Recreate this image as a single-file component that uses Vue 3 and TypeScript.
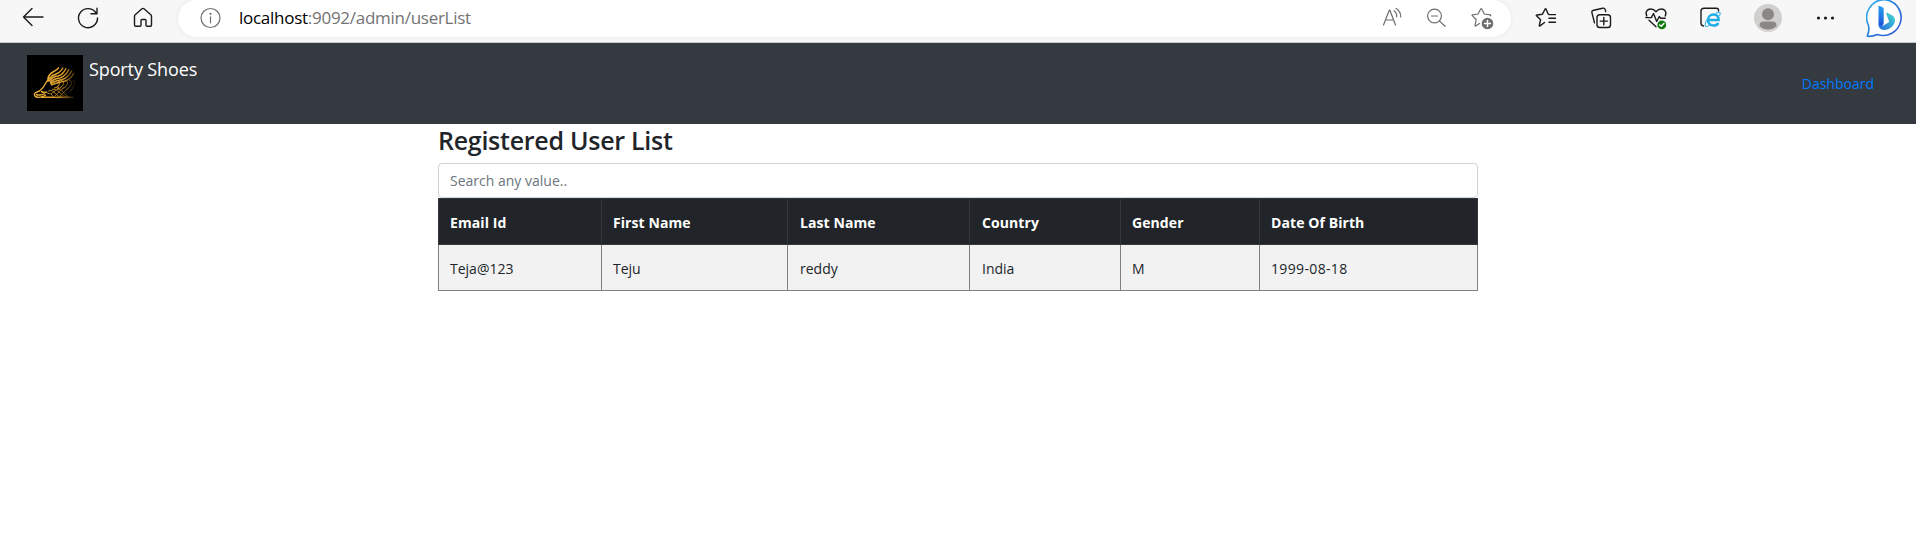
<script setup lang="ts">
interface User {
  email: string
  firstName: string
  lastName: string
  country: string
  gender: string
  birth: string
}

const columns: { key: keyof User; label: string }[] = [
  { key: 'email', label: 'Email Id' },
  { key: 'firstName', label: 'First Name' },
  { key: 'lastName', label: 'Last Name' },
  { key: 'country', label: 'Country' },
  { key: 'gender', label: 'Gender' },
  { key: 'birth', label: 'Date Of Birth' },
]

const users: User[] = [
  { email: 'Teja@123', firstName: 'Teju', lastName: 'reddy', country: 'India', gender: 'M', birth: '1999-08-18' },
]
</script>

<template>
  <div class="page">
    <header class="toolbar">
      <svg class="icon" viewBox="0 0 24 24"><path d="M22 11H2.500M11 2.500 2.500 11l8.500 8.500" /></svg>
      <svg class="icon refresh" viewBox="0 0 24 24"><path d="M20.300 7.500A9.500 9.500 0 1 0 21.500 12M21 2.200v5.500h-6" /></svg>
      <svg class="icon home" viewBox="0 0 24 24"><path d="M3.500 10.200Q3.500 9.300 4.200 8.700L11 2.800q1-.8 2 0l6.800 5.900q.7.6.7 1.500v8.800q0 1.200-1.200 1.200h-3.100q-1.200 0-1.200-1.200V14.500q0-1-1-1h-3q-1 0-1 1V19q0 1.200-1.200 1.200H4.700q-1.200 0-1.200-1.200z" /></svg>
      <div class="address">
        <svg class="icon muted" viewBox="0 0 24 24"><circle cx="11.500" cy="12" r="9.500" /><path d="M11.500 10.800v6" /><circle cx="11.500" cy="7.800" r=".5" /></svg>
        <span class="url"><b>localhost</b>:9092/admin/userList</span>
        <svg class="icon muted read" viewBox="0 0 24 24"><path d="M3.500 19 9.300 4.200h.6L15.500 19M5.500 14h8M14 4.800q3 2 2.700 6M16 2.500q5 3 4.700 8.500" /></svg>
        <svg class="icon muted glass" viewBox="0 0 24 24"><circle cx="10.500" cy="10" r="6.900" /><path d="m15.400 14.900 5.600 5.400M7.500 10h6" /></svg>
        <svg class="icon muted addstar" viewBox="0 0 24 24"><path d="M9.500 17.500 5.700 20q-.8.200-.7-.7l1.200-5.800L2.200 9.600q-.4-.6.300-.8L8 8l2.800-5.200q.4-.6.8 0L14.300 8l6 .8q.8.300.2 1" /><circle cx="17.500" cy="17.500" r="5.200" fill="#6e6e6e" /><path d="M17.500 14.500v6M14.500 17.500h6" stroke="#fff" stroke-width="1.500" /></svg>
      </div>
      <svg class="icon favs" viewBox="0 0 24 24"><path d="M10.500 16.500 6 19.900q-.9.400-.7-.6l1.300-5.600L2.500 9.800q-.6-.7.300-.8l5.600-.8L11.200 3q.4-.6.8 0l2.300 5.200q.3.400.8.400h6.400M15 12.300h6.500M15 16.200h6.500" /></svg>
      <svg class="icon next" viewBox="0 0 24 24"><rect x="8" y="8.700" width="13.500" height="12.800" rx="2.800" /><path d="M14.800 11.500v7.200M11.200 15.100h7.200M5.500 16.800 3 7Q2.300 4.800 4.700 4.200l9-2q2-.4 2.500 1.400l.5 2" /></svg>
      <svg class="icon next" viewBox="0 0 24 24"><path d="M2.800 10C.8 5.500 3.500 3 6.700 3c2.500 0 4.100 1.200 5.300 2.700C13.200 4.200 14.800 3 17.300 3c3.200 0 5.900 2.500 3.900 7M1.800 11.600h5.500L9.500 7.500l3.200 8 2.600-5 1.300 1.800h4.600M5 14.300l7 6.500" /><circle cx="17.800" cy="18.900" r="4.400" fill="#107c10" stroke="none" /><path d="m15.700 18.900 1.500 1.400 2.700-2.700" stroke="#fff" /></svg>
      <svg class="icon next" viewBox="0 0 24 24"><path d="M4.500 20Q2 19.700 2 17V5q0-2.800 3-2.800h12.300q2.200 0 2.200 2V5" /><path d="M8.700 14.100h11c.1-3.600-2-5.700-5.200-5.700s-5.500 2.400-5.500 5.700 2.300 5.400 5.500 5.400c2.300 0 4.100-.9 4.800-2.600" stroke="#20aee8" stroke-width="2.500" stroke-linecap="butt" stroke-linejoin="miter" /><path d="M17 7.300c3.500-2 5.200-.8 3.600 2.200M8.600 12.500c-3.200 5-3.200 8.900 0 7.800 1-.4 2-1 3-1.700" stroke="#38b8ee" stroke-width="1.100" /></svg>
      <svg class="avatar" viewBox="0 0 28 28"><circle cx="14" cy="14" r="14" fill="#d2d0ce" /><circle cx="14" cy="10.200" r="6" fill="#8a8886" /><path d="M5.500 22c0-4 2-4.600 4-4.600h9c2 0 4 .6 4 4.600a12 12 0 0 1-17 0z" fill="#8a8886" /></svg>
      <svg class="icon next dots" viewBox="0 0 24 24"><circle cx="5.500" cy="12" r="1.600" /><circle cx="12.500" cy="12" r="1.600" /><circle cx="19.500" cy="12" r="1.600" /></svg>
      <svg class="bing" viewBox="0 0 38 38">
        <defs>
          <linearGradient id="ring" x1="0" y1="0" x2="1" y2="1"><stop stop-color="#35b9ed" /><stop offset=".5" stop-color="#287bdc" /><stop offset="1" stop-color="#3653d8" /></linearGradient>
          <linearGradient id="stem" x1="0" y1="0" x2="0" y2="1"><stop stop-color="#25a5ee" /><stop offset="1" stop-color="#1c4edb" /></linearGradient>
          <linearGradient id="bowl" x1="0" y1="1" x2="1" y2="0"><stop stop-color="#2367df" /><stop offset="1" stop-color="#45ddd0" /></linearGradient>
        </defs>
        <path d="M19 -.4a18 18 0 1 1-7.800 34.900Q6.500 36.700 1.600 36.300 1 36 1.500 35.200 3.600 31 2.500 25.500A18 18 0 0 1 19 -.4z" fill="#fff" stroke="url(#ring)" stroke-width="1.600" />
        <path d="m12.500 5.500 3.600 1.400q1.600.5 1.600 1.800v15l-2 3.200Q12.500 27 12.500 24z" fill="url(#stem)" />
        <path d="M20.300 13.800q-.6-1.300.8-1l4.500 2.300q3.400 1.900 3.400 5.200c0 5-5.500 9.700-10.800 9.700-3.800 0-5.700-2.500-5.700-5.700 1 2 3.300 2 4.900 1.200l5.800-3.500-1.500-4.300z" fill="url(#bowl)" />
      </svg>
    </header>

    <nav class="navbar">
      <a class="brand">
        <svg class="logo" viewBox="0 0 56 56">
          <defs>
            <linearGradient id="gold" gradientUnits="userSpaceOnUse" x1="7" y1="0" x2="50" y2="0"><stop stop-color="#f2b338" /><stop offset=".55" stop-color="#c98e24" /><stop offset="1" stop-color="#000" /></linearGradient>
            <linearGradient id="wing" gradientUnits="userSpaceOnUse" x1="20" y1="0" x2="52" y2="0"><stop stop-color="#f2b338" /><stop offset=".5" stop-color="#d99c2c" /><stop offset="1" stop-color="#1c1202" /></linearGradient>
          </defs>
          <rect width="56" height="56" />
          <g fill="none" stroke="url(#gold)">
            <path d="M7.500 38.500q2-1.500 5-2.500 4-3 6-7.500 1.500-3 3.500-4.500M7.500 38.500q-.5 3.500 3.500 3.800 5 .3 8-2.600M9 39.500q5 1.500 9-1M14 36.500q3 1.500 6 .5" stroke-width="1.400" />
            <path d="M14 42.300q16-.1 33 .1" stroke-width="1.500" />
            <path d="M21 36q4-2 7 2t7 4M25 34q5 0 8 4t8 4M30 34q5 0 7 4t7 4M20 38q4 0 7 4M24 39q4-3 8-7M28 41q4-4 9-9M33 41q4-4 8-8" stroke-width=".8" />
            <path d="M30 25q4 2 2 5t-5 3M34 25q4 2 2 5t-5 4M38 25q4 2 2 5t-5 4M42 25q4 2 2 5t-5 5M46 25q3 2 1 6t-4 5" stroke-width="1.100" />
          </g>
          <g fill="none" stroke="url(#wing)" stroke-width="1.400">
            <path d="M21 27V23q1-4 5-6 4-2 6-4.500M22 24q3-4 7-5 5-2 7-6.500M22 26q5-5 9-5 6-2 8-8M23 27q6-4 10-4 6-2 9-9M23 28.500q7-3 12-4 6-1.500 10-9M24 30q9-3 14-4 6-2 9-8" />
          </g>
        </svg>
        <span>Sporty Shoes</span>
      </a>
      <a class="link">Dashboard</a>
    </nav>

    <main class="content">
      <h2>Registered User List</h2>
      <input class="search" type="text" placeholder="Search any value.." />
      <table>
        <colgroup>
          <col class="c1" /><col class="c2" /><col class="c3" /><col class="c4" /><col class="c5" /><col class="c6" />
        </colgroup>
        <thead>
          <tr><th v-for="c in columns" :key="c.key">{{ c.label }}</th></tr>
        </thead>
        <tbody>
          <tr v-for="u in users" :key="u.email"><td v-for="c in columns" :key="c.key" :class="c.key">{{ u[c.key] }}</td></tr>
        </tbody>
      </table>
    </main>
  </div>
</template>

<style>
body { margin: 0; background: #fff; }
</style>

<style scoped>
* { box-sizing: border-box; }
.page {
  width: 1916px;
  height: 558px;
  overflow: hidden;
  background: #fff;
  color: #212529;
  font-family: "Open Sans", "Noto Sans", sans-serif;
  font-size: 14px;
}
.toolbar {
  display: flex;
  align-items: flex-start;
  height: 43px;
  padding-left: 21px;
  background: #f7f7f7;
  border-bottom: 1px solid #c3c8c8;
}
.icon {
  flex: none;
  width: 24px;
  height: 24px;
  margin-top: 6px;
  fill: none;
  stroke: #1b1b1b;
  stroke-width: 1.4;
  stroke-linecap: round;
  stroke-linejoin: round;
}
.refresh, .home, .next { margin-left: 31px; }
.address {
  display: flex;
  flex: none;
  width: 1333px;
  height: 37px;
  margin-left: 23px;
  padding: 0 17px 0 21px;
  border-radius: 19px;
  background: #fff;
  box-shadow: 0 0 5px rgba(0, 0, 0, .07);
}
.muted { stroke: #6e6e6e; stroke-width: 1.2; }
.url {
  margin-left: 16px;
  font-size: 17px;
  line-height: 35px;
  letter-spacing: -.27px;
  color: #737373;
}
.url b { font-weight: 400; color: #000; }
.read { margin-left: auto; }
.glass { margin-left: 20px; }
.addstar { margin-left: 22px; }
.favs { margin-left: 23px; }
.avatar { flex: none; width: 28px; height: 28px; margin: 4px 0 0 31px; }
.dots { fill: #1b1b1b; stroke: none; }
.bing { flex: none; width: 38px; height: 38px; margin-left: 29px; }
.navbar {
  display: flex;
  justify-content: space-between;
  height: 81px;
  padding: 12px 42px 0 27px;
  background: #343a40;
}
.brand {
  display: flex;
  gap: 6px;
  color: #fff;
  font-size: 18px;
  line-height: 29px;
  letter-spacing: -.12px;
}
.logo { width: 56px; height: 56px; }
.link {
  margin-top: 17px;
  color: #007bff;
  line-height: 24px;
}
.content { width: 1040px; margin: 0 auto; }
h2 {
  height: 39px;
  margin: 0;
  font-size: 25px;
  font-weight: 600;
  line-height: 33px;
  letter-spacing: -.27px;
}
.search {
  display: block;
  width: 100%;
  height: 35px;
  padding: 0 11px;
  border: 1px solid #ced4da;
  border-radius: 4px;
  outline: none;
  font: inherit;
}
.search::placeholder { color: #6c757d; opacity: 1; }
table {
  width: 1040px;
  table-layout: fixed;
  border-spacing: 0;
  border-collapse: separate;
}
.c1 { width: 163px; }
.c2 { width: 186px; }
.c3 { width: 182px; }
.c4 { width: 151px; }
.c5 { width: 139px; }
.c6 { width: 219px; }
th, td {
  padding: 2px 11px 0;
  border-left: 1px solid #808080;
  text-align: left;
  line-height: 22px;
}
th:nth-child(3), td:nth-child(3), th:nth-child(4), td:nth-child(4) { padding-left: 12px; }
th {
  height: 47px;
  border-color: #32383e;
  border-top: 1px solid #32383e;
  border-bottom: 1px solid #32383e;
  background: #212529;
  color: #fff;
  font-weight: 700;
  letter-spacing: .08px;
}
td {
  height: 46px;
  border-bottom: 1px solid #808080;
  background: #f2f2f2;
}
.birth { letter-spacing: .35px; }
th:last-child { border-right: 1px solid #32383e; }
td:last-child { border-right: 1px solid #808080; }
</style>
